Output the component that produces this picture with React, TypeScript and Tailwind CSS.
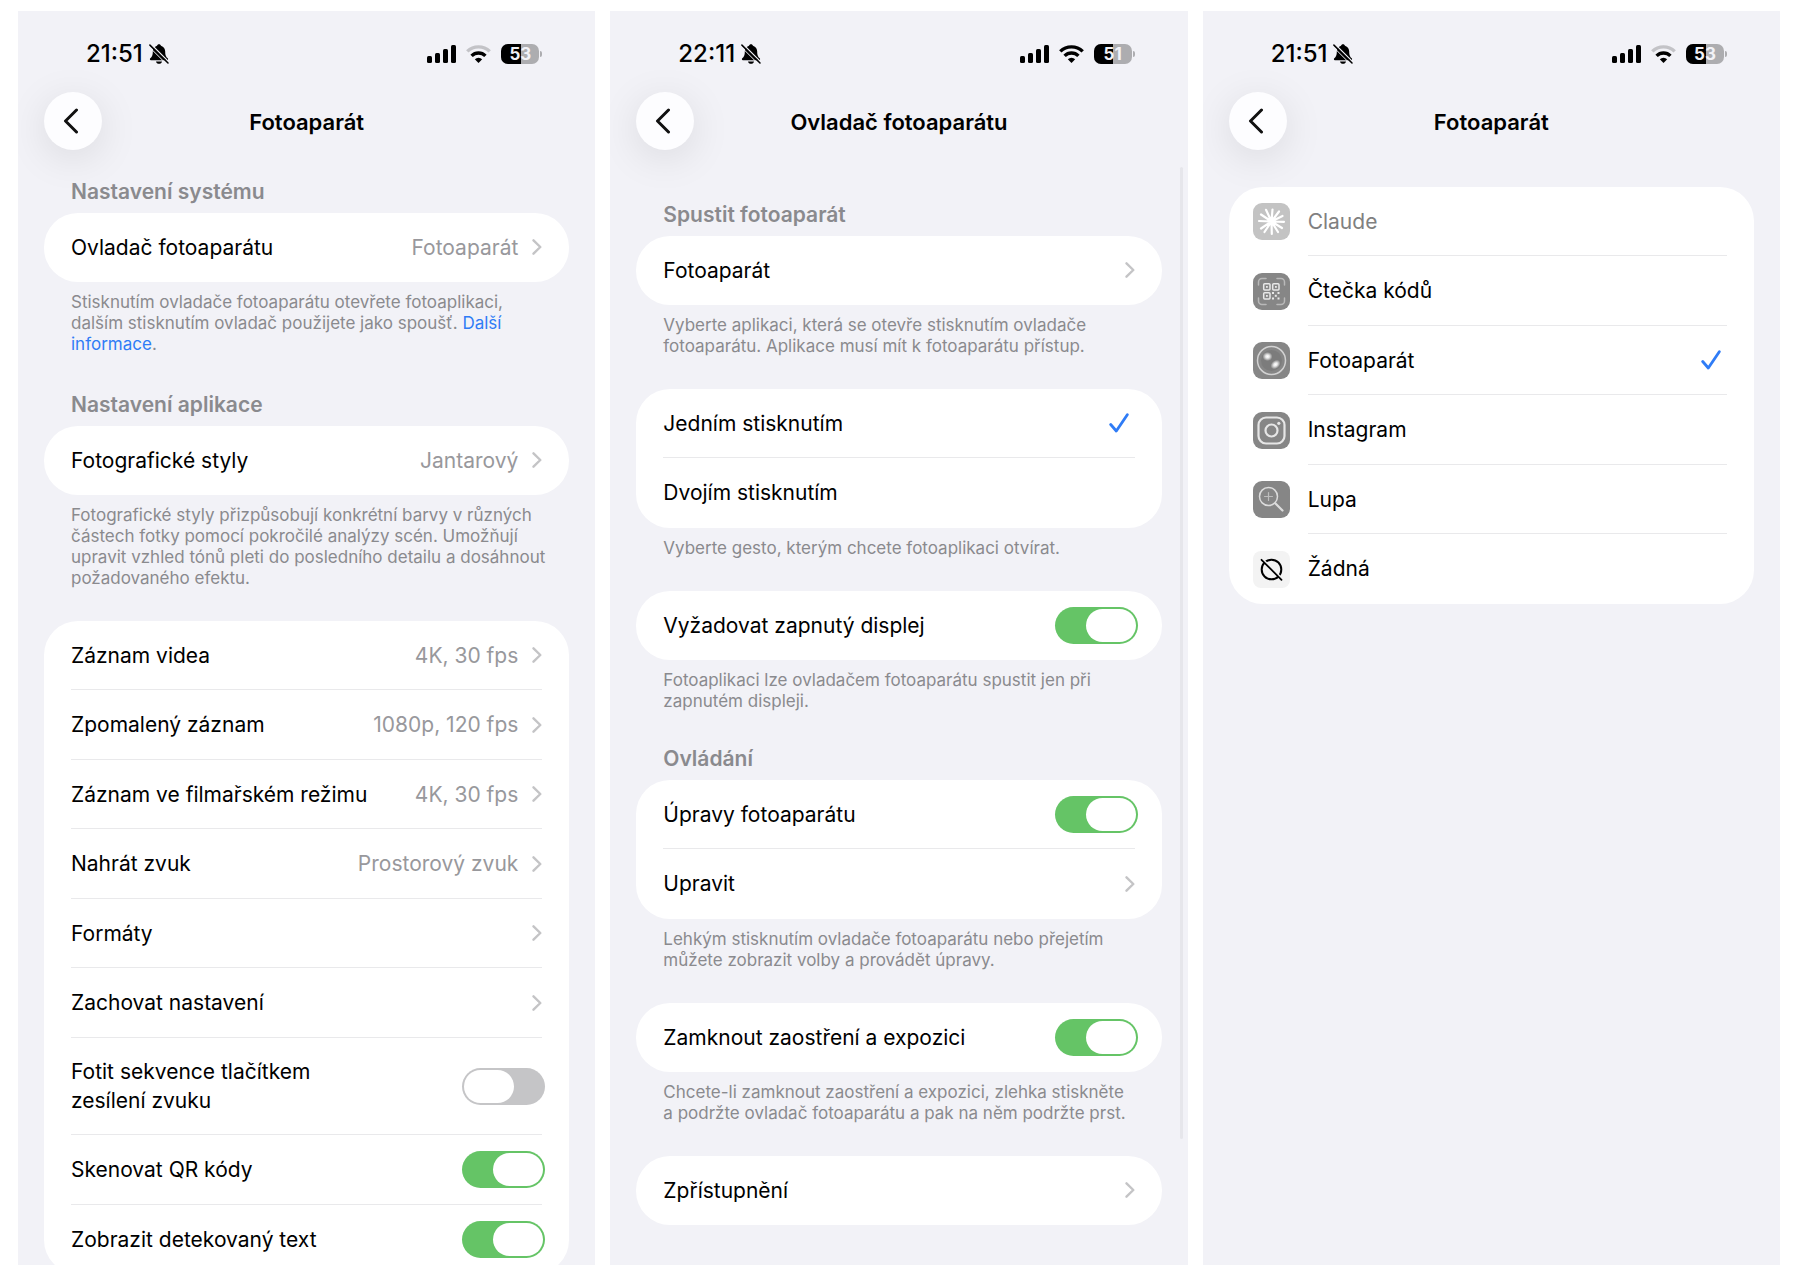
import React, { useId, useState } from 'react';

const StatusBar = ({ time, battery, weakWifi }: { time: string; battery: number; weakWifi?: boolean }) => (
  <div className="flex shrink-0 items-center justify-between pt-[28px] pl-[68px] pr-[53px] h-[58px]">
    <div className="flex items-center gap-1.5">
      <span className="text-[24px] leading-[30px] font-medium">{time}</span>
      <svg className="w-5 h-5" viewBox="0 0 20 20" fill="currentColor">
        <path d="M10 .3c-1 0-1.800.7-2 1.500C5.200 2.700 3.800 5 3.800 7.600c0 4-.9 5.300-2.500 6.700-.7.6-.5 1.900.6 1.900h16.200c1.100 0 1.300-1.300.6-1.900-1.600-1.400-2.500-2.700-2.500-6.700 0-2.600-1.400-4.900-4.200-5.800C11.800 1 11 .3 10 .3Z" />
        <path d="M7 17.400h6c-.3 1.300-1.500 2.400-3 2.400s-2.700-1.100-3-2.400Z" />
        <path d="M2 .2 20.200 18.400" stroke="#f2f2f7" strokeWidth="1.300" />
        <path d="M.9 1.100 19 19" stroke="currentColor" strokeWidth="1.500" strokeLinecap="round" />
        <path d="M-.4 2.300 17.400 20" stroke="#f2f2f7" strokeWidth="1" />
      </svg>
    </div>
    <div className="flex items-center">
      <svg className="w-[29px] h-[18px] mr-2.5" viewBox="0 0 29 18" fill="currentColor">
        <rect x="0" y="11" width="5" height="7" rx="1.500" />
        <rect x="8" y="8" width="5" height="10" rx="1.500" />
        <rect x="16" y="4" width="5" height="14" rx="1.500" />
        <rect x="24" y="0" width="5" height="18" rx="1.500" />
      </svg>
      <svg className="w-[25px] h-[18px] mr-2.5" viewBox="0 0 25 18" fill="none" stroke="currentColor" strokeWidth="3.400">
        <path d="M1.300 6.400a16 16 0 0 1 22.400 0" stroke={weakWifi ? '#c3c3c7' : 'currentColor'} />
        <path d="M5.600 10.900a9.800 9.800 0 0 1 13.800 0" />
        <path d="M12.500 18 8.800 14.200a5.300 5.300 0 0 1 7.400 0Z" fill="currentColor" stroke="none" />
      </svg>
      <div className="relative flex items-center justify-center w-[38px] h-5 rounded-[7px] overflow-hidden bg-[#adadb0]">
        <div className="absolute inset-y-0 left-0 bg-black" style={{ width: `${battery}%` }} />
        <span className="relative text-[17px] leading-5 font-bold text-[#f2f2f7]">{battery}</span>
      </div>
      <div className="w-[2px] h-[6px] ml-px rounded-r-full bg-[#adadb0]" />
    </div>
  </div>
);

const NavBar = ({ title }: { title: string }) => (
  <div className="grid shrink-0 grid-cols-[58px_1fr_58px] items-center mt-[23px] px-[26px]">
    <button
      aria-label="Zpět"
      className="flex items-center justify-center w-[58px] h-[58px] rounded-full bg-[#fdfdff] shadow-[0_8px_40px_rgba(0,0,0,0.10)]"
    >
      <svg className="w-4 h-[26px] mr-1" viewBox="0 0 16 26" fill="none" stroke="#111" strokeWidth="3" strokeLinecap="round" strokeLinejoin="round">
        <path d="M13.500 2 2.500 13l11 11" />
      </svg>
    </button>
    <h1 className="pt-px text-center text-[22px] leading-7 font-semibold">{title}</h1>
  </div>
);

const Chevron = () => (
  <svg className="w-2.5 h-4 ml-3.5 shrink-0" viewBox="0 0 10 16" fill="none" stroke="#c4c4c6" strokeWidth="2.400" strokeLinecap="round" strokeLinejoin="round">
    <path d="M1.500 1.300 8.300 8l-6.800 6.700" />
  </svg>
);

const CheckMark = () => (
  <svg className="w-5 h-5 mr-1.5 shrink-0" viewBox="0 0 20 20" fill="none" stroke="#2f7cf6" strokeWidth="2.800" strokeLinecap="round" strokeLinejoin="round">
    <path d="M1.700 11.500 7.300 18 18.300 1.700" />
  </svg>
);

const Card = ({ children }: { children: React.ReactNode }) => (
  <div className="rounded-[34px] bg-white overflow-hidden">{children}</div>
);

const rowClass =
  'flex w-full items-center justify-between min-h-[69px] group-even:min-h-[70px] py-[19px] text-left border-b border-[#e9e9eb] group-last:border-transparent';

const Row = ({ children }: { children: React.ReactNode }) => <div className="group px-[27px]">{children}</div>;

const LinkRow = ({ label, value }: { label: string; value?: string }) => (
  <Row>
    <button className={rowClass}>
      <span>{label}</span>
      <span className="flex items-center text-[#98989c]">
        {value}
        <Chevron />
      </span>
    </button>
  </Row>
);

const SwitchRow = ({ label, initial, narrow }: { label: string; initial: boolean; narrow?: boolean }) => {
  const id = useId();
  const [on, setOn] = useState(initial);

  return (
    <Row>
      <div className={rowClass}>
        <label htmlFor={id} className={narrow ? 'max-w-[260px]' : ''}>{label}</label>
        <input
          id={id}
          type="checkbox"
          role="switch"
          checked={on}
          onChange={(e) => setOn(e.target.checked)}
          className="appearance-none flex items-center shrink-0 w-[83px] h-[37px] -my-1 -mr-[3px] p-[2px] rounded-full bg-[#c5c5c7] checked:bg-[#65c466] checked:justify-end before:content-[''] before:w-[50px] before:h-[33px] before:rounded-full before:bg-white"
        />
      </div>
    </Row>
  );
};

const PressRow = ({ label, checked, onSelect }: { label: string; checked: boolean; onSelect: () => void }) => (
  <Row>
    <label className={`${rowClass} relative`}>
      <input type="radio" name="gesture" className="sr-only" checked={checked} onChange={onSelect} />
      <span>{label}</span>
      {checked && <CheckMark />}
    </label>
  </Row>
);

const Heading = ({ children }: { children: React.ReactNode }) => (
  <h2 className="px-[27px] pb-1.5 text-[21px] leading-[30px] font-semibold text-[#8a8a8e]">{children}</h2>
);

const Note = ({ children }: { children: React.ReactNode }) => (
  <p className="pl-[27px] pr-5 pt-2.5 text-[17px] leading-[21px] text-[#8a8a8e]">{children}</p>
);

const Phone = ({ children }: { children: React.ReactNode }) => (
  <section className="relative flex flex-col min-w-0 overflow-hidden bg-[#f2f2f7]">{children}</section>
);

const ClaudeIcon = () => (
  <svg className="w-[37px] h-[37px] shrink-0" viewBox="0 0 37 37">
    <rect width="37" height="37" rx="9" fill="#c3c3c3" />
    <g stroke="#fff" strokeWidth="2.200" strokeLinecap="round">
      <path d="M18.500 18.500 19.500 6.500M18.500 18.500 26 8.500M18.500 18.500 29.500 13M18.500 18.500 31 18.800M18.500 18.500 29 25M18.500 18.500 25 29M18.500 18.500 18.800 31M18.500 18.500 11.500 29M18.500 18.500 8 25.500M18.500 18.500 6 18M18.500 18.500 8 11.500M18.500 18.500 13 6.800" />
    </g>
  </svg>
);

const CodeIcon = () => (
  <svg className="w-[37px] h-[37px] shrink-0" viewBox="0 0 37 37" fill="none">
    <rect width="37" height="37" rx="9" fill="#868686" />
    <g stroke="#b9b9b9" strokeWidth="1.500" strokeLinecap="round">
      <path d="M5.500 12V9a3.500 3.500 0 0 1 3.500-3.500h4M24 5.500h4A3.500 3.500 0 0 1 31.500 9v3M31.500 25v3a3.500 3.500 0 0 1-3.500 3.500h-4M13 31.500H9A3.500 3.500 0 0 1 5.500 28v-3" />
    </g>
    <g stroke="#e8e8e8" strokeWidth="1.500">
      <rect x="10.700" y="10.700" width="6.300" height="6.300" rx="1" />
      <rect x="19.700" y="10.700" width="6.300" height="6.300" rx="1" />
      <rect x="10.700" y="19.700" width="6.300" height="6.300" rx="1" />
    </g>
    <g fill="#e8e8e8">
      <rect x="13" y="13" width="1.800" height="1.800" />
      <rect x="22" y="13" width="1.800" height="1.800" />
      <rect x="13" y="22" width="1.800" height="1.800" />
      <rect x="19" y="19" width="2" height="2" />
      <rect x="24.500" y="19" width="2" height="2" />
      <rect x="21.800" y="21.800" width="2" height="2" />
      <rect x="19" y="24.500" width="2" height="2" />
      <rect x="24.500" y="24.500" width="2" height="2" />
    </g>
  </svg>
);

const CameraIcon = () => (
  <svg className="w-[37px] h-[37px] shrink-0" viewBox="0 0 37 37" fill="none">
    <defs>
      <radialGradient id="lens-glow">
        <stop offset="0" stopColor="#fff" />
        <stop offset="0.350" stopColor="#fff" stopOpacity="0.850" />
        <stop offset="1" stopColor="#fff" stopOpacity="0" />
      </radialGradient>
    </defs>
    <rect width="37" height="37" rx="9" fill="#868686" />
    <circle cx="18.500" cy="18.500" r="14" stroke="#d2d2d2" strokeWidth="1.500" />
    <circle cx="18.500" cy="18.500" r="10.500" fill="#7c7c7c" />
    <ellipse cx="14.500" cy="14.500" rx="5" ry="4.500" fill="url(#lens-glow)" />
    <ellipse cx="22.500" cy="22.500" rx="5.500" ry="4" transform="rotate(-40 22.500 22.500)" fill="url(#lens-glow)" />
  </svg>
);

const InstagramIcon = () => (
  <svg className="w-[37px] h-[37px] shrink-0" viewBox="0 0 37 37" fill="none" stroke="#e6e6e6" strokeWidth="2.200">
    <rect width="37" height="37" rx="9" fill="#868686" stroke="none" />
    <rect x="5.500" y="5.500" width="26" height="26" rx="7.500" />
    <circle cx="18.500" cy="18.500" r="6" />
    <circle cx="25.800" cy="11.300" r="1.600" fill="#e6e6e6" stroke="none" />
  </svg>
);

const MagnifierIcon = () => (
  <svg className="w-[37px] h-[37px] shrink-0" viewBox="0 0 37 37" fill="none" strokeLinecap="round">
    <rect width="37" height="37" rx="9" fill="#868686" />
    <circle cx="15.500" cy="15.500" r="9" stroke="#dcdcdc" strokeWidth="1.500" />
    <path d="M15.500 11.500v8M11.500 15.500h8" stroke="#bdbdbd" strokeWidth="1.200" />
    <path d="m22.500 22.500 7 7" stroke="#dcdcdc" strokeWidth="2.200" />
  </svg>
);

const NoneIcon = () => (
  <svg className="w-[37px] h-[37px] shrink-0" viewBox="0 0 37 37" fill="none">
    <rect width="37" height="37" rx="8" fill="#f3f3f3" />
    <circle cx="18.500" cy="18.500" r="9.800" stroke="#000" strokeWidth="2" />
    <path d="M9.500 8 29.500 28" stroke="#f3f3f3" strokeWidth="1.800" />
    <path d="m8.500 8.800 20 20" stroke="#000" strokeWidth="1.800" strokeLinecap="round" />
  </svg>
);

const apps = [
  { name: 'Claude', icon: ClaudeIcon, disabled: true },
  { name: 'Čtečka kódů', icon: CodeIcon },
  { name: 'Fotoaparát', icon: CameraIcon },
  { name: 'Instagram', icon: InstagramIcon },
  { name: 'Lupa', icon: MagnifierIcon },
  { name: 'Žádná', icon: NoneIcon },
];

const CameraSettings = () => (
  <Phone>
    <StatusBar time="21:51" battery={53} weakWifi />
    <NavBar title="Fotoaparát" />
    <div className="px-[26px] pt-[27px]">
      <Heading>Nastavení systému</Heading>
      <Card>
        <LinkRow label="Ovladač fotoaparátu" value="Fotoaparát" />
      </Card>
      <Note>
        Stisknutím ovladače fotoaparátu otevřete fotoaplikaci, dalším stisknutím ovladač použijete jako spoušť.{' '}
        <a href="#" className="text-[#2f7cf6]">Další<br />informace</a>.
      </Note>
      <div className="pt-[35px]">
        <Heading>Nastavení aplikace</Heading>
        <Card>
          <LinkRow label="Fotografické styly" value="Jantarový" />
        </Card>
        <Note>
          Fotografické styly přizpůsobují konkrétní barvy v různých částech fotky pomocí pokročilé analýzy scén. Umožňují
          upravit vzhled tónů pleti do posledního detailu a dosáhnout požadovaného efektu.
        </Note>
      </div>
      <div className="pt-8">
        <Card>
          <LinkRow label="Záznam videa" value="4K, 30 fps" />
          <LinkRow label="Zpomalený záznam" value="1080p, 120 fps" />
          <LinkRow label="Záznam ve filmařském režimu" value="4K, 30 fps" />
          <LinkRow label="Nahrát zvuk" value="Prostorový zvuk" />
          <LinkRow label="Formáty" />
          <LinkRow label="Zachovat nastavení" />
          <SwitchRow label="Fotit sekvence tlačítkem zesílení zvuku" initial={false} narrow />
          <SwitchRow label="Skenovat QR kódy" initial />
          <SwitchRow label="Zobrazit detekovaný text" initial />
        </Card>
      </div>
    </div>
  </Phone>
);

const CameraControl = () => {
  const [press, setPress] = useState('single');

  return (
    <Phone>
      <StatusBar time="22:11" battery={51} />
      <NavBar title="Ovladač fotoaparátu" />
      <div className="flex flex-col gap-8 px-[26px] pt-[50px]">
        <div>
          <Heading>Spustit fotoaparát</Heading>
          <Card>
            <LinkRow label="Fotoaparát" />
          </Card>
          <Note>Vyberte aplikaci, která se otevře stisknutím ovladače fotoaparátu. Aplikace musí mít k fotoaparátu přístup.</Note>
        </div>
        <div>
          <Card>
            <PressRow label="Jedním stisknutím" checked={press === 'single'} onSelect={() => setPress('single')} />
            <PressRow label="Dvojím stisknutím" checked={press === 'double'} onSelect={() => setPress('double')} />
          </Card>
          <Note>Vyberte gesto, kterým chcete fotoaplikaci otvírat.</Note>
        </div>
        <div>
          <Card>
            <SwitchRow label="Vyžadovat zapnutý displej" initial />
          </Card>
          <Note>Fotoaplikaci lze ovladačem fotoaparátu spustit jen při zapnutém displeji.</Note>
        </div>
        <div>
          <Heading>Ovládání</Heading>
          <Card>
            <SwitchRow label="Úpravy fotoaparátu" initial />
            <LinkRow label="Upravit" />
          </Card>
          <Note>Lehkým stisknutím ovladače fotoaparátu nebo přejetím můžete zobrazit volby a provádět úpravy.</Note>
        </div>
        <div>
          <Card>
            <SwitchRow label="Zamknout zaostření a expozici" initial />
          </Card>
          <Note>Chcete-li zamknout zaostření a expozici, zlehka stiskněte a&nbsp;podržte ovladač fotoaparátu a pak na něm podržte prst.</Note>
        </div>
        <Card>
          <LinkRow label="Zpřístupnění" />
        </Card>
      </div>
      {/* scroll indicator */}
      <div className="absolute right-[5px] top-[156px] bottom-[126px] w-[3px] rounded-full bg-[#e6e6eb]" />
    </Phone>
  );
};

const AppPicker = () => {
  const [selected, setSelected] = useState('Fotoaparát');

  return (
    <Phone>
      <StatusBar time="21:51" battery={53} weakWifi />
      <NavBar title="Fotoaparát" />
      <div className="px-[26px] pt-[37px]">
        <Card>
          {apps.map((app) => (
            <label key={app.name} className="group relative flex items-center gap-[18px] pl-6 pr-[27px]">
              <input
                type="radio"
                name="launch-app"
                className="sr-only"
                disabled={app.disabled}
                checked={selected === app.name}
                onChange={() => setSelected(app.name)}
              />
              <app.icon />
              <span className={`${rowClass} ${app.disabled ? 'text-[#808080]' : ''}`}>
                {app.name}
                {selected === app.name && <CheckMark />}
              </span>
            </label>
          ))}
        </Card>
      </div>
    </Phone>
  );
};

export default function App() {
  return (
    <main className="grid grid-cols-3 gap-[15px] h-screen pt-[11px] pb-[15px] pl-[18px] pr-5 bg-white text-black text-[21px] leading-[29px] font-['Inter','Liberation_Sans',sans-serif]">
      <CameraSettings />
      <CameraControl />
      <AppPicker />
    </main>
  );
}
